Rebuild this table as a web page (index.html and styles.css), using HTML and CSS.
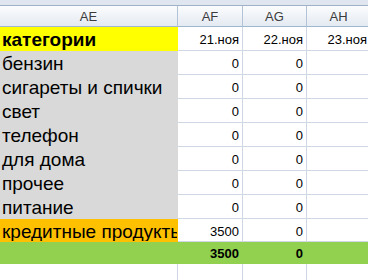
FILE: index.html
```html
<!DOCTYPE html>
<html lang="ru">
<head>
    <meta charset="UTF-8">
    <title>Расходы</title>
    <link rel="stylesheet" href="styles.css">
</head>
<body>
    <div class="sheet">
        <div class="topbar"></div>
        <div class="grid">
            <!-- column headers -->
            <div class="hd">AE</div>
            <div class="hd">AF</div>
            <div class="hd">AG</div>
            <div class="hd">AH</div>

            <div class="cell label title">категории</div>
            <div class="cell num">21.ноя</div>
            <div class="cell num">22.ноя</div>
            <div class="cell num">23.ноя</div>

            <div class="cell label gray">бензин</div>
            <div class="cell num">0</div>
            <div class="cell num">0</div>
            <div class="cell"></div>

            <div class="cell label gray">сигареты и спички</div>
            <div class="cell num">0</div>
            <div class="cell num">0</div>
            <div class="cell"></div>

            <div class="cell label gray">свет</div>
            <div class="cell num">0</div>
            <div class="cell num">0</div>
            <div class="cell"></div>

            <div class="cell label gray">телефон</div>
            <div class="cell num">0</div>
            <div class="cell num">0</div>
            <div class="cell"></div>

            <div class="cell label gray">для дома</div>
            <div class="cell num">0</div>
            <div class="cell num">0</div>
            <div class="cell"></div>

            <div class="cell label gray">прочее</div>
            <div class="cell num">0</div>
            <div class="cell num">0</div>
            <div class="cell"></div>

            <div class="cell label gray">питание</div>
            <div class="cell num">0</div>
            <div class="cell num">0</div>
            <div class="cell"></div>

            <div class="cell label credit">кредитные продукты</div>
            <div class="cell num">3500</div>
            <div class="cell num">0</div>
            <div class="cell"></div>

            <!-- totals row -->
            <div class="cell total"></div>
            <div class="cell num total">3500</div>
            <div class="cell num total">0</div>
            <div class="cell total"></div>

            <div class="cell"></div>
            <div class="cell"></div>
            <div class="cell"></div>
            <div class="cell"></div>
        </div>
    </div>
</body>
</html>
```

FILE: styles.css
```css
body {
    margin: 0;
    padding: 0;
    background-color: #fff;
    font-family: 'Liberation Sans', Arial, sans-serif;
}

.sheet {
    width: 368px;
    height: 280px;
    overflow: hidden;
}

/* strip above the column headers */
.topbar {
    height: 5px;
    background-color: #dfe6ef;
    border-bottom: 1px solid #9fb1c7;
}

/* header, 8 rows, credit row, totals, blank */
.grid {
    display: grid;
    grid-template-columns: 178px 65px 64px 64px;
    grid-template-rows: 21px repeat(8, 24px) 23px 22px 24px;
    width: 371px;
}

.hd {
    box-sizing: border-box;
    padding-top: 1px;
    background: linear-gradient(#fbfcfd, #e4eaf2);
    border-right: 1px solid #b3c3d6;
    border-bottom: 1px solid #9eb6ce;
    color: #3b3b3b;
    font-size: 13px;
    line-height: 20px;
    text-align: center;
}

/* text sits low in the cell, like the spreadsheet does */
.cell {
    box-sizing: border-box;
    padding-top: 2px;
    border-right: 1px solid #d0d7e5;
    border-bottom: 1px solid #d0d7e5;
    font-size: 13px;
    line-height: 22px;
    color: #000;
    white-space: nowrap;
    overflow: hidden;
}

.num {
    text-align: right;
    padding-right: 3px;
}

.label {
    font-size: 19px;
    padding-left: 2px;
}

.title {
    background-color: #ffff00;
    border-color: #ffff00;
    font-weight: bold;
}

.gray {
    background-color: #d9d9d9;
    border-color: #d9d9d9;
}

.credit {
    background-color: #ffc000;
    border-color: #ffc000;
}

.total {
    background-color: #92d050;
    border-color: #92d050;
    font-weight: bold;
    line-height: 20px;
}
```
